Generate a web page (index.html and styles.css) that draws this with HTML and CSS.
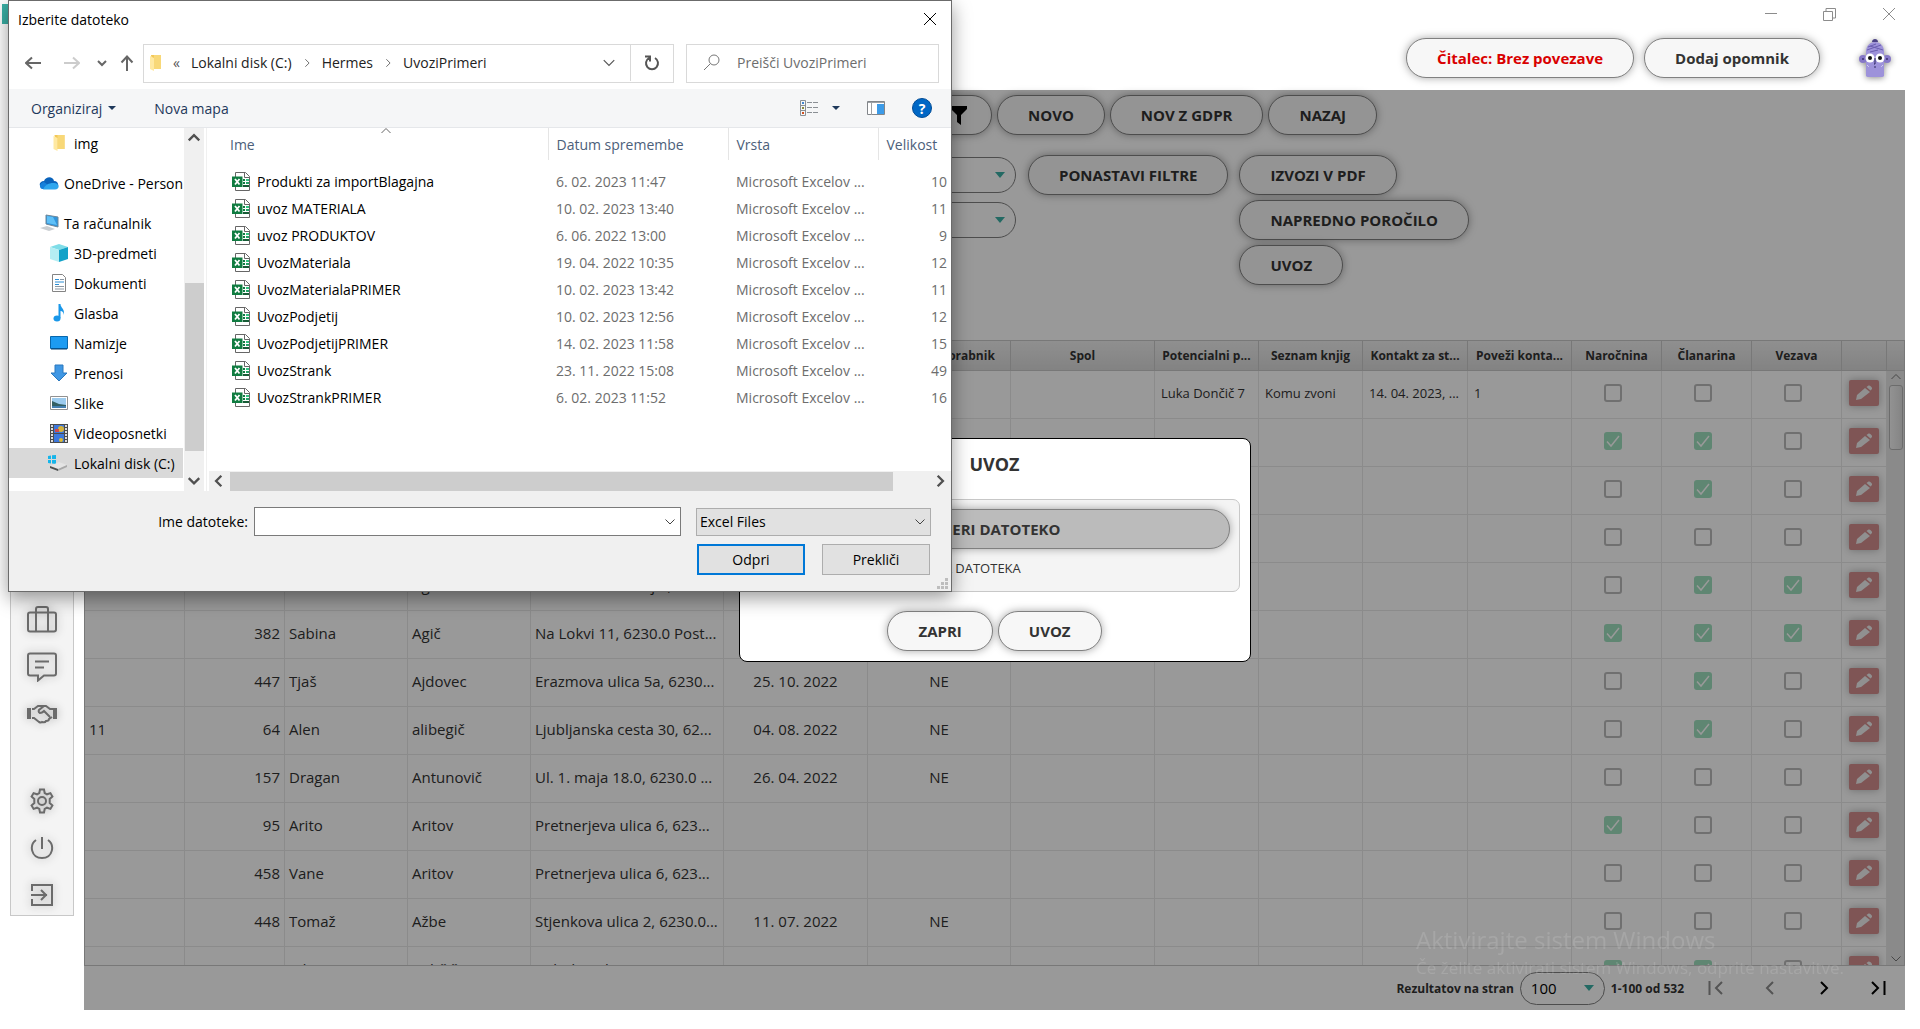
FILE: index.html
```html
<!DOCTYPE html>
<html lang="sl">
<head>
    <meta charset="UTF-8">
    <meta name="viewport" content="width=device-width, initial-scale=1.0">
    <title>Hermes - Stranke</title>
    <link rel="stylesheet" href="styles.css">
</head>
<body>
    <!-- shared icons -->
    <svg class="sprite" aria-hidden="true">
        <symbol id="i-down" viewBox="0 0 12 12"><path d="M1.500 3.500 6 8l4.500-4.500" fill="none" stroke="currentColor"/></symbol>
        <symbol id="i-up" viewBox="0 0 12 12"><path d="M1.500 8 6 3.500 10.500 8" fill="none" stroke="currentColor"/></symbol>
        <symbol id="i-left" viewBox="0 0 12 12"><path d="M8 1.500 3.500 6 8 10.500" fill="none" stroke="currentColor"/></symbol>
        <symbol id="i-right" viewBox="0 0 12 12"><path d="M4 1.500 8.500 6 4 10.500" fill="none" stroke="currentColor"/></symbol>
        <symbol id="i-close" viewBox="0 0 12 12"><path d="M0 0 12 12M12 0 0 12" fill="none" stroke="currentColor"/></symbol>
        <symbol id="i-caret" viewBox="0 0 8 4"><path d="M0 0h8L4 4z" fill="currentColor"/></symbol>
        <symbol id="i-folder" viewBox="0 0 13 18"><path d="M2 1h10v14H4z" fill="#f3c857"/><path d="M5 1h7v14H5z" fill="#f8d878"/><path d="M1 2l4 2v13l-4-2z" fill="#ffe9a2"/></symbol>
        <symbol id="i-pencil" viewBox="0 0 18 16"><path d="M1 15l1-5 8-7 5 4-9 7zM11.500 2l2-1.500c2 0 4 2 3.500 3.500l-1.500 1.500z" fill="currentColor"/></symbol>
        <symbol id="i-excel" viewBox="0 0 19 21">
            <path d="M3.500 1.500h10l4 4v14h-14z" fill="#fff" stroke="#666"/>
            <path d="M12.500 1.500v5h5" fill="none" stroke="#666"/>
            <path d="M11 8h2v2h-2zM11 11h2v2h-2z" fill="#107c41"/>
            <path d="M14 8h3v2h-3z" fill="#33c481"/><path d="M14 11h3v2h-3z" fill="#21a366"/><path d="M11 14h6v2h-6z" fill="#185c37"/>
            <path d="M0 5.500h10.500v10.500H0z" fill="#107c41"/>
            <path d="M3 8l4.500 5.500M7.500 8 3 13.500" stroke="#fff" stroke-width="1.800" fill="none"/>
        </symbol>
    </svg>

    <div class="app">
        <header class="app-header">
            <div class="app-logo"></div>
            <div class="header-side">
                <div class="window-buttons">
                    <button type="button" aria-label="Minimiraj"><svg width="12" height="12"><path d="M0 5.500h12" stroke="currentColor"/></svg></button>
                    <button type="button" aria-label="Obnovi"><svg width="13" height="13" fill="none" stroke="currentColor"><path d="M.5 3.500h9v9h-9zM3 3V.5h9.500V10H10"/></svg></button>
                    <button type="button" aria-label="Zapri okno"><svg width="12" height="12"><use href="#i-close"/></svg></button>
                </div>
                <div class="header-actions">
                    <button type="button" class="pill pill-danger">Čitalec: Brez povezave</button>
                    <button type="button" class="pill">Dodaj opomnik</button>
                    <svg class="mascot" width="32" height="38" viewBox="0 0 32 38">
                        <path d="M13 3c0-4 6-4 6 0z" fill="#4b4285"/>
                        <circle cx="4" cy="20" r="4" fill="#8678c8"/><circle cx="28" cy="20" r="4" fill="#8678c8"/>
                        <path d="M7 12C8 0 24 0 25 12v25q-1 1-2 1H9q-1 0-2-1z" fill="#9d92da"/>
                        <path d="M9 8l8-3M8 11l14-5M11 13l8-2M11 7l13 4" stroke="#6a5eb0" fill="none"/>
                        <circle cx="4" cy="20" r="1" fill="#3a3270"/><circle cx="28" cy="20" r="1" fill="#3a3270"/>
                        <circle cx="11" cy="19" r="4.500" fill="#fff"/><circle cx="21" cy="19" r="4.500" fill="#fff"/>
                        <circle cx="11" cy="19" r="2" fill="#111"/><circle cx="21" cy="19" r="2" fill="#111"/>
                        <path d="M16 19v6h-1M15 28h2" stroke="#2d2760" fill="none"/>
                        <path d="M8 26l2 2M24 26l-2 2" stroke="#e9e6fa" stroke-dasharray="1 1"/>
                    </svg>
                </div>
            </div>
        </header>

        <div class="app-body">
            <nav class="sidebar">
                <a href="#" aria-label="Posel"><svg width="30" height="30" viewBox="0 0 30 30"><rect x="1" y="7.500" width="28" height="19" rx="2"/><path d="M9 26V4q0-2 2-2h8q2 0 2 2v22"/></svg></a>
                <a href="#" aria-label="Sporočila"><svg width="30" height="30" viewBox="0 0 30 30"><path d="M3 1.500h24q2 0 2 2v18q0 2-2 2H17l-6 5v-5H3q-2 0-2-2v-18q0-2 2-2zM8 9.500h14M8 15.500h9"/></svg></a>
                <a href="#" aria-label="Partnerji"><svg width="30" height="20" viewBox="0 0 30 20"><path d="M0 4h4v11H0zM26 4h4v11h-4z" fill="currentColor" stroke="none"/><path d="M5 5h2l4-3h8l4 3h3M5 14h2l5 4q2 1 3 0 3 1 4-1 3 0 3-2l3-2M17 2l-5 4q-1 2 1 3 2 0 4-2l6 6"/></svg></a>
                <a href="#" class="sidebar-settings" aria-label="Nastavitve"><svg width="26" height="26" viewBox="0 0 26 26"><circle cx="13" cy="13" r="4"/><path d="M11 1.500h4l.700 3.500 2.300 1.300 3.400-1.200 2 3.500-2.700 2.300v4.200l2.700 2.300-2 3.500-3.400-1.200-2.300 1.300-.7 3.500h-4l-.7-3.500L8 19.700l-3.400 1.200-2-3.500 2.700-2.300v-4.200L2.600 8.600l2-3.500L8 6.300 10.300 5z"/></svg></a>
                <a href="#" aria-label="Izklop"><svg width="24" height="24" viewBox="0 0 24 24"><path d="M12 1v12M6 4C-1 9 1 22 12 22S25 9 18 4"/></svg></a>
                <a href="#" aria-label="Odjava"><svg width="24" height="24" viewBox="0 0 24 24"><path d="M2 8V2h20v20H2v-6M1 12h16M11 7l5 5-5 5"/></svg></a>
            </nav>

            <main class="panel">
                <div class="toolbar">
                    <div class="toolbar-search"><input type="search" class="field" aria-label="Iskanje"></div>
                    <button type="button" class="pill pill-icon" aria-label="Filter"><svg width="16" height="19" viewBox="0 0 16 19"><path d="M0 0h16v3l-6 6v10l-4-3V9L0 3z"/></svg></button>
                    <button type="button" class="pill">NOVO</button>
                    <button type="button" class="pill">NOV Z GDPR</button>
                    <button type="button" class="pill">NAZAJ</button>
                </div>
                <div class="filters">
                    <div class="filter-fields">
                        <select class="field" aria-label="Skupina"><option></option></select>
                        <select class="field" aria-label="Status"><option></option></select>
                    </div>
                    <button type="button" class="pill">PONASTAVI FILTRE</button>
                    <div class="reports">
                        <button type="button" class="pill">IZVOZI V PDF</button>
                        <button type="button" class="pill">NAPREDNO POROČILO</button>
                        <button type="button" class="pill">UVOZ</button>
                    </div>
                </div>

                <div class="grid-wrap">
                    <div class="grid-scroll">
                        <table class="grid">
                            <colgroup>
                                <col style="width:100px"><col style="width:100px"><col style="width:123px"><col style="width:123px">
                                <col style="width:193px"><col style="width:144px"><col style="width:143px"><col style="width:144px">
                                <col style="width:104px"><col style="width:104px"><col style="width:105px"><col style="width:104px">
                                <col style="width:90px"><col style="width:90px"><col style="width:90px"><col style="width:45px">
                            </colgroup>
                            <thead>
                                <tr>
                                    <th></th><th></th><th></th><th></th><th></th><th></th>
                                    <th>Aktiven uporabnik</th><th>Spol</th><th>Potencialni p...</th><th>Seznam knjig</th>
                                    <th>Kontakt za st...</th><th>Poveži konta...</th><th>Naročnina</th><th>Članarina</th><th>Vezava</th><th></th>
                                </tr>
                            </thead>
                            <tbody id="rows"></tbody>
                        </table>
                    </div>
                    <div class="grid-bar">
                        <div class="grid-bar-head"></div>
                        <svg width="12" height="12"><use href="#i-up"/></svg>
                        <div class="grid-bar-track"><div class="grid-bar-thumb"></div></div>
                        <svg width="12" height="12"><use href="#i-down"/></svg>
                    </div>
                </div>

                <footer class="pager">
                    <label for="pageSize">Rezultatov na stran</label>
                    <select id="pageSize" class="field pager-size"><option>100</option></select>
                    <span class="pager-count">1-100 od 532</span>
                    <div class="pager-buttons">
                        <button type="button" disabled aria-label="Prva"><svg width="16" height="16" viewBox="0 0 16 16"><path d="M1.500 1v14M14 2 8 8l6 6"/></svg></button>
                        <button type="button" disabled aria-label="Prejšnja"><svg width="16" height="16" viewBox="0 0 16 16"><path d="M11 2 5 8l6 6"/></svg></button>
                        <button type="button" aria-label="Naslednja"><svg width="16" height="16" viewBox="0 0 16 16"><path d="M5 2l6 6-6 6"/></svg></button>
                        <button type="button" aria-label="Zadnja"><svg width="16" height="16" viewBox="0 0 16 16"><path d="M2 2l6 6-6 6M14.500 1v14"/></svg></button>
                    </div>
                </footer>

                <div class="overlay">
                    <section class="modal">
                        <h2>UVOZ</h2>
                        <div class="modal-box">
                            <button type="button" class="pill pill-pressed">IZBERI DATOTEKO</button>
                            <p>IZBRANA DATOTEKA</p>
                        </div>
                        <div class="modal-buttons">
                            <button type="button" class="pill">ZAPRI</button>
                            <button type="button" class="pill">UVOZ</button>
                        </div>
                    </section>
                </div>
            </main>
        </div>
    </div>

    <div class="watermark">
        <p class="watermark-title">Aktivirajte sistem Windows</p>
        <p>Če želite aktivirati sistem Windows, odprite nastavitve.</p>
    </div>

    <!-- file picker window -->
    <section class="dialog">
        <div class="dialog-title">
            <span>Izberite datoteko</span>
            <button type="button" aria-label="Zapri"><svg width="12" height="12"><use href="#i-close"/></svg></button>
        </div>
        <div class="dialog-nav">
            <div class="nav-arrows">
                <button type="button" aria-label="Nazaj"><svg width="16" height="16" viewBox="0 0 16 16"><path d="M16 8H1M7 2.500 1 8l6 5.500"/></svg></button>
                <button type="button" class="faded" aria-label="Naprej"><svg width="16" height="16" viewBox="0 0 16 16"><path d="M0 8h15M9 2.500 15 8l-6 5.500"/></svg></button>
                <button type="button" aria-label="Nedavno"><svg width="10" height="16" viewBox="0 0 10 16"><path d="M1 6l4 4 4-4"/></svg></button>
                <button type="button" aria-label="Gor"><svg width="14" height="16" viewBox="0 0 14 16"><path d="M7 16V2M1.500 7.500 7 1.500l5.500 6"/></svg></button>
            </div>
            <div class="address">
                <svg width="13" height="18"><use href="#i-folder"/></svg>
                <span class="address-more">«</span>
                <a href="#">Lokalni disk (C:)</a>
                <svg class="address-sep" width="10" height="10"><use href="#i-right"/></svg>
                <a href="#">Hermes</a>
                <svg class="address-sep" width="10" height="10"><use href="#i-right"/></svg>
                <a href="#">UvoziPrimeri</a>
                <svg class="address-drop" width="14" height="14"><use href="#i-down"/></svg>
                <button type="button" class="refresh" aria-label="Osveži"><svg width="16" height="16" viewBox="0 0 16 16"><path d="M11 3a6 6 0 1 1-6 0M1 1.500h5v5"/></svg></button>
            </div>
            <label class="search">
                <svg width="18" height="18" viewBox="0 0 18 18"><circle cx="11" cy="6" r="5"/><path d="M7.500 9.500 1 16"/></svg>
                <input type="text" placeholder="Preišči UvoziPrimeri" aria-label="Preišči UvoziPrimeri">
            </label>
        </div>
        <div class="dialog-tools">
            <button type="button">Organiziraj <svg width="8" height="4"><use href="#i-caret"/></svg></button>
            <button type="button">Nova mapa</button>
            <div class="tools-right">
                <button type="button" aria-label="Pogled">
                    <svg width="18" height="16" viewBox="0 0 18 16"><path d="M.5.5h5v15h-5zM.5 5.500h5M.5 10.500h5" stroke="#8a8f94" fill="none"/><path d="M7 2.500h5M13 2.500h5M7 7.500h5M13 7.500h5M7 12.500h5M13 12.500h5" stroke="#8a8f94"/><path d="M2 2h2v2H2z" fill="#4186d0"/><path d="M2 7h2v2H2z" fill="#8a8a3c"/><path d="M2 12h2v2H2z" fill="#d2501e"/></svg>
                    <svg width="8" height="4"><use href="#i-caret"/></svg>
                </button>
                <button type="button" aria-label="Predogled"><svg width="18" height="14" viewBox="0 0 18 14"><path d="M.5.5h17v13H.5z" fill="#fff" stroke="#82868a"/><path d="M1 1.500h16M4.500 2v12" stroke="#9da1a5"/><path d="M10 3h7v10h-7z" fill="#3c9be8"/></svg></button>
                <button type="button" class="help" aria-label="Pomoč">?</button>
            </div>
        </div>
        <div class="dialog-body">
            <ul class="tree">
                <li><svg width="18" height="18"><use href="#i-folder"/></svg>img</li>
                <li class="root"><svg width="20" height="14" viewBox="0 0 20 14"><path d="M4 12C-1 11 0 5 5 5 7 0 14 0 15 5c5 0 6 7 1 8z" fill="#0a63bb"/><path d="M3 13C0 12 0 7 5 6l10 7z" fill="#1580db"/><path d="M4 13.500C6 9 10 7 14 7c6-1 8 6 2 6.500z" fill="#2ea6ee"/></svg>OneDrive - Person</li>
                <li class="root"><svg width="20" height="18" viewBox="0 0 20 18"><path d="M7 1l12 2v10L7 10z" fill="#2f95dd" stroke="#6f8799"/><path d="M8 2l6 1 4 8-10-2z" fill="#5fc0f7"/><path d="M1 14l7-2 8 3-6 2z" fill="#c9ced2"/></svg>Ta računalnik</li>
                <li><svg width="18" height="18" viewBox="0 0 18 18"><path d="M0 3l9-3 9 3-9 3z" fill="#7fdde8"/><path d="M0 3l9 3v12l-9-3z" fill="#b5eef3"/><path d="M18 3 9 6v12l9-3z" fill="#12a2c8"/></svg>3D-predmeti</li>
                <li><svg width="18" height="18" viewBox="0 0 18 18"><path d="M2.500.5h10l3 3v14h-13z" fill="#fff" stroke="#848484"/><path d="M5 5.500h4M5 8h9M5 10.500h4" stroke="#2d8fd5"/><path d="M5 12.500h9M5 15h9M10 5.500h4" stroke="#8b98a4"/></svg>Dokumenti</li>
                <li><svg width="18" height="18" viewBox="0 0 18 18"><ellipse cx="7" cy="14.500" rx="3.500" ry="3" fill="#1997e9"/><path d="M8.500 14.500V0h2c0 4 5 5 3 11 0-3-1-4-3-4v7z" fill="#1997e9"/></svg>Glasba</li>
                <li><svg width="18" height="14" viewBox="0 0 18 14"><path d="M.5.5h17v12H.5z" fill="#1c9bf2" stroke="#0767ad"/><path d="M1 13h16" stroke="#043f6e"/></svg>Namizje</li>
                <li><svg width="18" height="18" viewBox="0 0 18 18"><path d="M5 1h8v8h4l-8 8-8-8h4z" fill="#3f97e4" stroke="#2a78be"/></svg>Prenosi</li>
                <li><svg width="18" height="14" viewBox="0 0 18 14"><path d="M.5.5h17v13H.5z" fill="#fff" stroke="#919191"/><path d="M2 2h14v10H2z" fill="#9ccbee"/><path d="M2 5l7 3 7 1v3H2z" fill="#335f63"/><path d="M2 10h14v2H2z" fill="#447fb0"/></svg>Slike</li>
                <li><svg width="18" height="19" viewBox="0 0 18 19"><path d="M0 0h18v19H0z" fill="#4c4c4c"/><path d="M2 1v18M16 1v18" stroke="#ddd" stroke-width="2" stroke-dasharray="2 1"/><path d="M4 1h10v8H4zM4 10h10v8H4z" fill="#3d78dc"/><circle cx="11" cy="5" r="3" fill="#d5b23b"/><path d="M5 5h4v3H5z" fill="#cf4a4a"/><circle cx="11" cy="16" r="2" fill="#e0bb2f"/></svg>Videoposnetki</li>
                <li class="selected"><svg width="20" height="18" viewBox="0 0 20 18"><path d="M0 2l3-.5V5H0zM4 1.300 8 1v4H4zM0 6h3v3.500L0 9zM4 6h4v4l-4-.4z" fill="#16b5ea"/><path d="M2 12l9-4 8 3-9 4z" fill="#e4e4e4"/><path d="M2 12l8 3v2l-8-3z" fill="#4d5150"/><path d="M10 15l9-4v2l-9 4z" fill="#a8a8a8"/></svg>Lokalni disk (C:)</li>
            </ul>
            <div class="vbar">
                <svg width="14" height="14"><use href="#i-up"/></svg>
                <div class="vbar-track"><div class="vbar-thumb"></div></div>
                <svg width="14" height="14"><use href="#i-down"/></svg>
            </div>
            <div class="files">
                <svg class="sort-mark" width="12" height="12"><use href="#i-up"/></svg>
                <table class="file-table">
                    <colgroup><col class="c-name"><col class="c-date"><col class="c-type"><col class="c-size"></colgroup>
                    <thead><tr><th>Ime</th><th>Datum spremembe</th><th>Vrsta</th><th>Velikost</th></tr></thead>
                    <tbody id="files"></tbody>
                </table>
                <div class="hbar">
                    <svg width="14" height="14"><use href="#i-left"/></svg>
                    <div class="hbar-track"><div class="hbar-thumb"></div></div>
                    <svg width="14" height="14"><use href="#i-right"/></svg>
                </div>
            </div>
        </div>
        <div class="dialog-footer">
            <div class="footer-row">
                <label for="fileName">Ime datoteke:</label>
                <div class="combo">
                    <input type="text" id="fileName">
                    <svg width="12" height="12"><use href="#i-down"/></svg>
                </div>
                <select class="file-type" aria-label="Vrsta datoteke"><option>Excel Files</option></select>
            </div>
            <div class="footer-row footer-buttons">
                <button type="button" class="win-button win-default">Odpri</button>
                <button type="button" class="win-button">Prekliči</button>
            </div>
            <svg class="grip" width="12" height="12" fill="#bdbdbd"><path d="M8 0h3v3H8zM4 4h3v3H4zM8 4h3v3H8zM0 8h3v3H0zM4 8h3v3H4zM8 8h3v3H8z"/></svg>
        </div>
    </section>

    <script src="app.js"></script>
</body>
</html>
```
FILE: styles.css
```css
* {
    box-sizing: border-box;
}

body {
    margin: 0;
    background-color: #ffffff;
    color: #333333;
    font-family: "Open Sans", sans-serif;
    font-size: 15px;
    overflow: hidden;
}

button, input, select {
    font: inherit;
    color: inherit;
}

button {
    padding: 0;
    border: none;
    background: none;
}

p, h2, ul {
    margin: 0;
    padding: 0;
}

a {
    color: inherit;
    text-decoration: none;
}

svg {
    flex: none;
    display: block;
}

.sprite {
    position: absolute;
    width: 0;
    height: 0;
}

/* app shell */
.app {
    display: flex;
    flex-direction: column;
    height: 100vh;
}

.app-header {
    display: flex;
    justify-content: space-between;
    height: 90px;
    padding: 4px 0 0 2px;
}

.app-logo {
    width: 20px;
    height: 20px;
    background-color: #3bb0a5;
}

.header-side {
    display: flex;
    flex-direction: column;
    align-items: flex-end;
    gap: 14px;
}

.window-buttons {
    display: flex;
    color: #8c8c8c;
}

.window-buttons button {
    display: flex;
    justify-content: center;
    align-items: center;
    width: 58px;
    height: 20px;
}

.window-buttons button:last-child {
    width: 62px;
}

.header-actions {
    display: flex;
    align-items: center;
    gap: 10px;
    padding-right: 29px;
}

.mascot {
    margin-left: 29px;
    filter: drop-shadow(0 1px 3px #888888);
}

.pill {
    height: 40px;
    padding: 0 30px;
    border: 1px solid #808080;
    border-radius: 20px;
    background-color: #f7f7f7;
    box-shadow: 0 0 9px rgba(0, 0, 0, 0.35);
    font-weight: bold;
    white-space: nowrap;
    flex: none;
}

.pill-danger {
    color: #d90000;
}

.pill-icon {
    padding: 0 24px;
    fill: #000000;
}

.pill-pressed {
    width: 100%;
    background-color: #bbbbbb;
}

.app-body {
    flex: 1;
    display: flex;
    min-height: 0;
    padding: 0 15px 19px 10px;
    gap: 10px;
}

.sidebar {
    display: flex;
    flex-direction: column;
    justify-content: flex-end;
    gap: 7px;
    width: 64px;
    margin-bottom: 94px;
    border: 1px solid #c8c8c8;
    background-color: #f4f4f4;
    color: #6b6b6b;
}

.sidebar a {
    display: flex;
    justify-content: center;
    align-items: center;
    height: 40px;
    filter: drop-shadow(0 0 4px #aaaaaa);
}

.sidebar svg {
    fill: none;
    stroke: currentColor;
    stroke-width: 2;
}

.sidebar-settings {
    margin-top: 40px;
}

/* main panel */
.panel {
    position: relative;
    flex: 1;
    display: flex;
    flex-direction: column;
    min-width: 0;
}

.toolbar {
    display: flex;
    gap: 5px;
    padding-top: 5px;
}

.toolbar-search {
    width: 837px;
    padding: 2px 12px;
}

.field {
    width: 240px;
    height: 36px;
    border: 1px solid #808080;
    border-radius: 18px;
    background-color: #ffffff;
}

select.field {
    appearance: none;
    padding: 0 10px;
    background-image: url("data:image/svg+xml,%3Csvg xmlns='http://www.w3.org/2000/svg' width='10' height='6'%3E%3Cpath d='M0 0h10L5 6z' fill='%233bb0a5'/%3E%3C/svg%3E");
    background-repeat: no-repeat;
    background-position: right 10px center;
}

.filters {
    display: flex;
    align-items: flex-start;
    margin-top: 20px;
}

.filter-fields {
    display: flex;
    flex-direction: column;
    align-items: flex-end;
    gap: 9px;
    width: 932px;
    margin-right: 12px;
    padding-top: 2px;
}

.reports {
    display: flex;
    flex-direction: column;
    align-items: flex-start;
    gap: 5px;
    margin-left: 11px;
}

.grid-wrap {
    flex: 1;
    display: flex;
    min-height: 0;
    margin-top: 55px;
    border: 1px solid #c8c8c8;
    border-top: none;
}

.grid-scroll {
    flex: 1;
    overflow: hidden;
}

.grid {
    width: 100%;
    table-layout: fixed;
    border-collapse: separate;
    border-spacing: 0;
}

.grid th, .grid-bar-head {
    height: 31px;
    border: 1px solid #c8c8c8;
    border-left: none;
    background: linear-gradient(#efefef, #dadada);
}

.grid th {
    padding: 1px 4px 0;
    font-size: 12px;
    line-height: 16px;
    white-space: nowrap;
}

.grid td {
    height: 48px;
    padding: 0 4px 3px;
    border-right: 1px solid #e8e8e8;
    border-bottom: 1px solid #e8e8e8;
    line-height: 20px;
    white-space: nowrap;
}

.grid .num {
    text-align: right;
}

.grid .mid {
    text-align: center;
}

.grid .small {
    padding: 0 6px 3px;
    font-size: 13px;
}

.grid .check {
    padding-right: 11px;
}

.grid input {
    appearance: none;
    display: block;
    width: 18px;
    height: 18px;
    margin: 0 auto;
    border: 2px solid #bbbbbb;
    border-radius: 3px;
}

.grid input:checked {
    border: none;
    background: #9edfbe url("data:image/svg+xml,%3Csvg xmlns='http://www.w3.org/2000/svg' width='18' height='18'%3E%3Cpath d='M3 9.500l4 4.500 8-10' fill='none' stroke='white' stroke-width='1.500'/%3E%3C/svg%3E");
}

.edit {
    display: flex;
    justify-content: center;
    align-items: center;
    width: 30px;
    height: 26px;
    margin: 0 auto;
    border-radius: 2px;
    background-color: #d48e8e;
    box-shadow: 0 0 8px rgba(0, 0, 0, 0.3);
    color: #f0f0f0;
}

.grid-bar {
    display: flex;
    flex-direction: column;
    align-items: center;
    width: 17px;
    background-color: #e6e6e6;
    color: #777777;
}

.grid-bar-head {
    width: 100%;
    border-right: none;
}

.grid-bar-track {
    flex: 1;
    padding-top: 2px;
}

.grid-bar-thumb {
    width: 14px;
    height: 65px;
    border: 1px solid #b4b4b4;
    border-radius: 3px;
    background: linear-gradient(90deg, #f4f4f4, #dddddd);
}

.pager {
    display: flex;
    align-items: center;
    justify-content: flex-end;
    height: 44px;
    font-size: 12px;
    font-weight: bold;
}

.pager select.pager-size {
    width: 85px;
    height: 33px;
    margin: 0 6px;
    font-size: 15px;
    font-weight: normal;
    color: #000000;
}

.pager-buttons {
    display: flex;
    margin-left: 5px;
}

.pager-buttons button {
    display: flex;
    justify-content: center;
    width: 54px;
    color: #000000;
}

.pager-buttons button:disabled {
    color: #8c8c8c;
}

.pager-buttons svg {
    fill: none;
    stroke: currentColor;
    stroke-width: 2;
}

/* import modal, dims the panel only */
.overlay {
    position: absolute;
    inset: 0;
    display: flex;
    justify-content: center;
    align-items: center;
    background-color: rgba(0, 0, 0, 0.4);
}

.modal {
    width: 512px;
    padding: 10px;
    border: 1px solid #000000;
    border-radius: 8px;
    background-color: #ffffff;
    text-align: center;
}

.modal h2 {
    margin-bottom: 20px;
    font-size: 18px;
    line-height: 30px;
}

.modal-box {
    height: 93px;
    padding: 9px;
    border: 1px solid #c8c8c8;
    border-radius: 7px;
    background-color: #f4f4f4;
}

.modal-box p {
    padding-right: 70px;
    font-size: 13px;
    line-height: 38px;
}

.modal-buttons {
    display: flex;
    justify-content: center;
    gap: 5px;
    padding-top: 19px;
}

.watermark {
    position: fixed;
    right: 76px;
    bottom: 47px;
    color: rgba(255, 255, 255, 0.13);
    font-size: 17px;
    line-height: 28px;
    pointer-events: none;
}

.watermark-title {
    font-size: 24px;
}

/* file picker */
.dialog {
    position: absolute;
    left: 8px;
    top: 0;
    width: 944px;
    border: 1px solid #6b6b6b;
    background-color: #ffffff;
    box-shadow: 0 6px 18px rgba(0, 0, 0, 0.4);
    color: #000000;
    font-family: "Segoe UI", "Open Sans", sans-serif;
    font-size: 14px;
}

.dialog-title {
    display: flex;
    justify-content: space-between;
    align-items: center;
    height: 36px;
    padding: 0 15px 0 9px;
}

.dialog-nav {
    display: flex;
    align-items: center;
    height: 52px;
    padding: 0 12px 0 16px;
    color: #222222;
}

.nav-arrows {
    display: flex;
    align-items: center;
    width: 118px;
}

.nav-arrows button {
    margin-right: 13px;
    color: #666666;
}

.nav-arrows button:first-child {
    margin-right: 23px;
}

.nav-arrows .faded {
    margin-right: 17px;
    color: #cccccc;
}

.nav-arrows svg, .refresh svg {
    fill: none;
    stroke: currentColor;
    stroke-width: 2;
}

.address, .search {
    display: flex;
    align-items: center;
    height: 39px;
    padding-bottom: 1px;
    border: 1px solid #d9d9d9;
}

.address {
    flex: 1;
    padding-left: 5px;
}

.address svg {
    color: #555555;
}

.address-more {
    margin: 0 11px 0 11px;
    color: #555555;
}

.address-sep {
    margin: 0 10px;
}

.address-drop {
    margin-left: auto;
}

.refresh {
    display: flex;
    justify-content: center;
    align-items: center;
    width: 43px;
    height: 37px;
    margin-left: 14px;
    border-left: 1px solid #d9d9d9;
}

.search {
    width: 253px;
    margin-left: 12px;
    padding-left: 16px;
    gap: 16px;
}

.search svg {
    fill: none;
    stroke: #777777;
}

.search input {
    flex: 1;
    min-width: 0;
    padding: 0;
    border: none;
    outline: none;
}

.search input::placeholder {
    color: #6d6d6d;
}

.dialog-tools {
    display: flex;
    align-items: center;
    gap: 38px;
    height: 39px;
    padding: 0 19px 0 22px;
    border-bottom: 1px solid #e5e7ea;
    background-color: #f5f6f7;
    color: #1e395b;
}

.dialog-tools button {
    display: flex;
    align-items: center;
    gap: 6px;
}

.tools-right {
    display: flex;
    align-items: center;
    gap: 27px;
    margin-left: auto;
}

.tools-right button:first-child {
    gap: 14px;
}

.dialog-tools .help {
    justify-content: center;
    width: 20px;
    height: 20px;
    border: 1px solid #004c96;
    border-radius: 50%;
    background-color: #0067c5;
    color: #ffffff;
    font-weight: bold;
}

.dialog-body {
    display: flex;
    height: 363px;
}

.tree {
    width: 175px;
    overflow: hidden;
    list-style: none;
}

.tree li {
    display: flex;
    align-items: center;
    gap: 6px;
    width: 174px;
    height: 30px;
    padding-left: 41px;
    white-space: nowrap;
}

.tree .root {
    margin-top: 10px;
    padding-left: 30px;
    gap: 5px;
}

/* drives get a wider icon */
.tree .selected {
    padding-left: 39px;
    background-color: #d9d9d9;
}

.vbar, .hbar {
    display: flex;
    align-items: center;
    background-color: #f0f0f0;
    color: #505050;
}

.vbar use, .hbar use {
    stroke-width: 2;
}

.vbar {
    flex-direction: column;
    width: 20px;
    padding: 3px 0;
}

.vbar-track {
    flex: 1;
    padding-top: 138px;
}

.vbar-thumb {
    width: 19px;
    height: 168px;
    background-color: #cdcdcd;
}

.files {
    position: relative;
    flex: 1;
    display: flex;
    flex-direction: column;
    justify-content: space-between;
    min-width: 0;
    margin-left: 2px;
    padding-left: 2px;
    border-left: 1px solid #f0f0f0;
}

/* sort arrow sits over the column heading */
.sort-mark {
    position: absolute;
    left: 173px;
    top: -3px;
    color: #666666;
}

.file-table {
    width: 100%;
    table-layout: fixed;
    border-collapse: collapse;
    color: #6d6d6d;
}

.c-date {
    width: 180px;
}

.c-type {
    width: 150px;
}

.c-size {
    width: 73px;
}

.file-table th {
    height: 32px;
    padding: 0 0 0 8px;
    border-right: 1px solid #e5e5e5;
    color: #4c607a;
    font-weight: normal;
    text-align: left;
}

.file-table th:first-child {
    padding-left: 21px;
}

.file-table th:last-child {
    border-right: none;
}

.file-table td {
    height: 27px;
    padding: 0 0 0 8px;
    white-space: nowrap;
}

.file-table tbody::before {
    content: "";
    display: block;
    height: 8px;
}

.file-table td:last-child {
    padding-right: 4px;
    text-align: right;
}

.file-name {
    display: flex;
    align-items: center;
    gap: 6px;
    padding-left: 15px;
    color: #000000;
}

.hbar {
    height: 20px;
    padding: 0 4px 0 3px;
}

.hbar-track {
    flex: 1;
    padding-left: 4px;
}

.hbar-thumb {
    width: 663px;
    height: 19px;
    background-color: #cdcdcd;
}

.dialog-footer {
    position: relative;
    height: 100px;
    padding: 16px 20px 0 0;
    background-color: #f0f0f0;
}

.footer-row {
    display: flex;
    justify-content: flex-end;
    align-items: center;
}

.combo {
    display: flex;
    align-items: center;
    width: 427px;
    height: 29px;
    margin: 0 15px 0 6px;
    padding: 0 4px;
    border: 1px solid #7a7a7a;
    background-color: #ffffff;
    color: #444444;
}

.combo input {
    flex: 1;
    border: none;
    outline: none;
}

.file-type {
    width: 235px;
    height: 28px;
    padding: 0 3px;
    appearance: none;
    border: 1px solid #adadad;
    border-radius: 0;
    background: #e1e1e1 url("data:image/svg+xml,%3Csvg xmlns='http://www.w3.org/2000/svg' width='10' height='6'%3E%3Cpath d='M.5.5 5 5 9.500.5' fill='none' stroke='%23444'/%3E%3C/svg%3E") no-repeat right 5px center;
}

.footer-buttons {
    gap: 17px;
    padding: 8px 1px 0 0;
}

.win-button {
    width: 108px;
    height: 31px;
    border: 1px solid #adadad;
    background-color: #e1e1e1;
}

.win-default {
    border: 2px solid #0078d7;
}

.grip {
    position: absolute;
    right: 2px;
    bottom: 1px;
}
```
FILE: app.js
```js
// group, id, name, surname, address, date, gdpr, [naročnina, članarina, vezava], extra
const people = [
    ['', '', '', '', '', '', '', [0, 0, 0], ['Luka Dončič 7', 'Komu zvoni', '14. 04. 2023, ...', '1']],
    ['', '', '', '', '', '', '', [1, 1, 0]],
    ['', '', '', '', '', '', '', [0, 1, 0]],
    ['', '', '', '', '', '', '', [0, 0, 0]],
    ['', '', '', 'Agič', 'Staro selo Zemelj 4,', '', '', [0, 1, 1]],
    ['', '382', 'Sabina', 'Agič', 'Na Lokvi 11, 6230.0 Post...', '', '', [1, 1, 1]],
    ['', '447', 'Tjaš', 'Ajdovec', 'Erazmova ulica 5a, 6230...', '25. 10. 2022', 'NE', [0, 1, 0]],
    ['11', '64', 'Alen', 'alibegič', 'Ljubljanska cesta 30, 62...', '04. 08. 2022', 'NE', [0, 1, 0]],
    ['', '157', 'Dragan', 'Antunovič', 'Ul. 1. maja 18.0, 6230.0 ...', '26. 04. 2022', 'NE', [0, 0, 0]],
    ['', '95', 'Arito', 'Aritov', 'Pretnerjeva ulica 6, 623...', '', '', [1, 0, 0]],
    ['', '458', 'Vane', 'Aritov', 'Pretnerjeva ulica 6, 623...', '', '', [0, 0, 0]],
    ['', '448', 'Tomaž', 'Ažbe', 'Stjenkova ulica 2, 6230.0...', '11. 07. 2022', 'NE', [0, 0, 0]],
    ['', '168', 'Edi', 'Babčič', 'Kolodvorska 20, 6230.0 ...', '04. 05. 2022', 'NE', [1, 1, 0]]
];

const files = [
    ['Produkti za importBlagajna', '6. 02. 2023 11:47', 10],
    ['uvoz MATERIALA', '10. 02. 2023 13:40', 11],
    ['uvoz PRODUKTOV', '6. 06. 2022 13:00', 9],
    ['UvozMateriala', '19. 04. 2022 10:35', 12],
    ['UvozMaterialaPRIMER', '10. 02. 2023 13:42', 11],
    ['UvozPodjetij', '10. 02. 2023 12:56', 12],
    ['UvozPodjetijPRIMER', '14. 02. 2023 11:58', 15],
    ['UvozStrank', '23. 11. 2022 15:08', 49],
    ['UvozStrankPRIMER', '6. 02. 2023 11:52', 16]
];

const checkNames = ['Naročnina', 'Članarina', 'Vezava'];

document.getElementById('rows').innerHTML = people.map(([group, id, name, surname, address, date, gdpr, checks, extra = ['', '', '', '']]) => `
    <tr>
        <td>${group}</td><td class="num">${id}</td><td>${name}</td><td>${surname}</td><td>${address}</td>
        <td class="mid">${date}</td><td class="mid">${gdpr}</td><td></td>
        ${extra.map(text => `<td class="small">${text}</td>`).join('')}
        ${checks.map((on, i) => `<td class="check"><input type="checkbox" aria-label="${checkNames[i]}"${on ? ' checked' : ''}></td>`).join('')}
        <td><button type="button" class="edit" aria-label="Uredi"><svg width="18" height="16"><use href="#i-pencil"/></svg></button></td>
    </tr>`).join('');

document.getElementById('files').innerHTML = files.map(([name, date, size]) => `
    <tr>
        <td><span class="file-name"><svg width="19" height="21"><use href="#i-excel"/></svg>${name}</span></td>
        <td>${date}</td><td>Microsoft Excelov ...</td><td>${size}</td>
    </tr>`).join('');
```
